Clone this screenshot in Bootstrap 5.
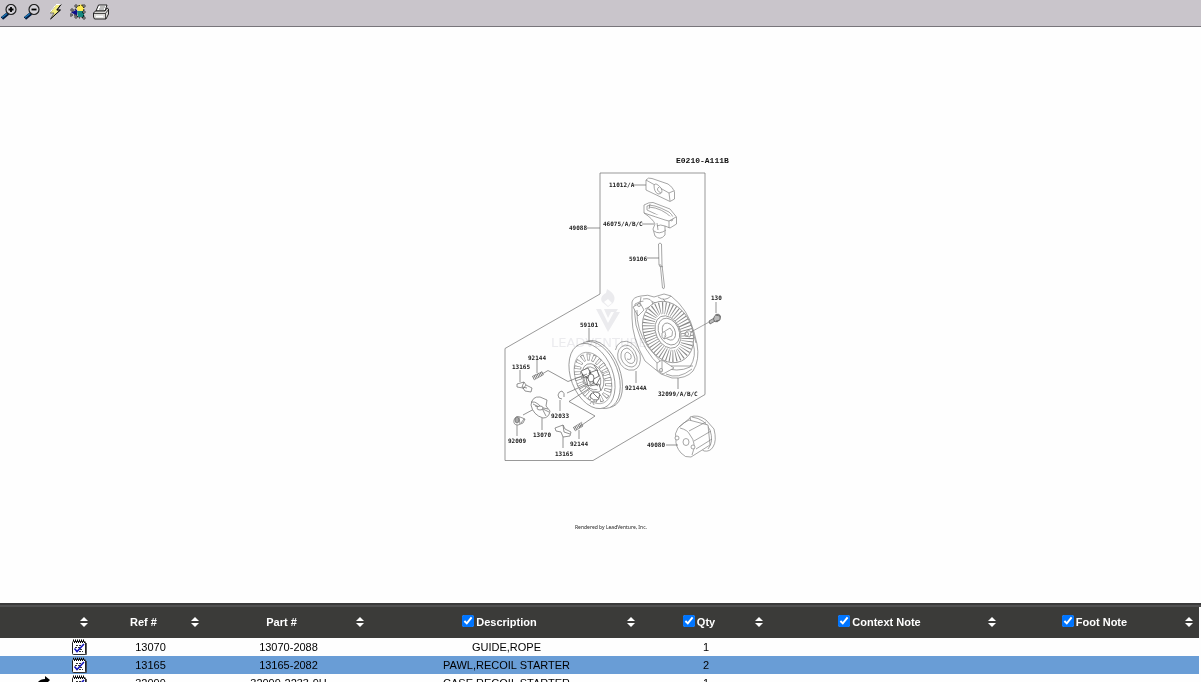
<!DOCTYPE html>
<html lang="en">
<head>
<meta charset="utf-8">
<meta name="viewport" content="width=device-width, initial-scale=1">
<title>Parts diagram</title>
<link rel="stylesheet" href="https://cdn.jsdelivr.net/npm/bootstrap@5.3.0/dist/css/bootstrap.min.css">
<style>
body { font-family: "Liberation Sans", Arial, sans-serif; font-size: 11px; line-height: 18px; color: #000; background: #fefefe; }
.toolstrip { background: #c9c5cb; border-bottom: 1px solid #77757a; height: 27px; gap: 7px; padding: 4px 1px 6px; flex: none; }
.tool { width: 16px; height: 16px; }
.plain-btn { background: none; border: 0; padding: 0; line-height: 0; display: block; }
.plain-btn svg { display: block; }
.drawing { min-height: 0; }
.drawing svg { display: block; width: 100%; height: 100%; }
.part-no { font: bold 6px "DejaVu Sans Mono", monospace; fill: #222; stroke: none; }
.sheet-no { font: bold 8px "Liberation Mono", monospace; fill: #111; stroke: none; }
.credit { font: 5px "Noto Sans", sans-serif; fill: #222; stroke: none; }
.wm { font: 13px "DejaVu Sans", sans-serif; fill: #ececef; stroke: none; }
.parts { flex: 0 0 79px; border-top: 2px solid #3a3a3a; }
.parts-scroll { border-top: 2px solid #505050; padding-right: 2px; height: 100%; }
.parts-table { table-layout: fixed; line-height: 18px; --bs-table-color: #000; color: #000; }
.parts-table > thead th { background: #3b3b39; color: #fff; height: 31px; padding: 0 6px 2px 2px; vertical-align: middle; }
.parts-table > tbody td { height: 18px; padding: 0 0 0 2px; text-align: center; vertical-align: middle; background: #fefefe; white-space: nowrap; }
.parts-table > tbody tr.picked td { background: #699dd6; }
.parts-table input { width: 12px; height: 12px; margin: 0 2px 3px 0; vertical-align: middle; accent-color: #0075ff; }
.c-mark { width: 8%; } .c-ref { width: 9%; } .c-part { width: 14%; } .c-desc { width: 22%; }
.c-qty { width: 11%; } .c-ctx { width: 19%; } .c-foot { width: 17%; }
@media (min-width: 900px) {
  .c-mark { width: 94px; } .c-ref { width: 111px; } .c-part { width: 165px; } .c-desc { width: auto; }
  .c-qty { width: 128px; } .c-ctx { width: 233px; } .c-foot { width: 197px; }
}
.marks { gap: 20px; padding-right: 7px; height: 18px; }
</style>
</head>
<body>
<svg width="0" height="0" class="position-absolute" aria-hidden="true">
  <symbol id="sort" viewBox="0 0 8 10"><path d="M4 0 8 4H0zM0 6h8L4 10z" fill="#fff"/></symbol>
  <symbol id="note" viewBox="0 0 16 16">
    <rect x="1.500" y="2.500" width="13" height="13" rx="1" fill="#fff" stroke="#222"/>
    <path d="M15.500 4v11.500H3" stroke="#333" fill="none" stroke-width=".8"/>
    <path d="M2 1.500h12M3 3.500h11" stroke="#000" stroke-dasharray="1 1"/>
    <path d="M2 .5h12" stroke="#777" stroke-dasharray="1 1"/>
    <path d="M5 6.500h5M4 8.500h5M9 10.500h3M8 12.500h4" stroke="#333" stroke-dasharray="2 1"/>
    <path d="M3.500 9.500 6 12.500 13 5" fill="none" stroke="#1515b8" stroke-width="1.600"/>
  </symbol>
</svg>

<div class="d-flex flex-column vh-100 overflow-hidden">
  <header class="toolstrip d-flex">
    <button class="plain-btn tool" type="button" aria-label="Zoom in"><svg width="16" height="16" viewBox="0 0 16 16"><path d="M1 14.500 7 9.500" stroke="#001a40" stroke-width="3.400"/><path d="M1 13.500 6 9.500" stroke="#1c78b8" stroke-width="1.400"/><circle cx="10" cy="5.500" r="5" fill="#d4d2d8" stroke="#222" stroke-width="1.200"/><path d="M10 3v5M7.500 5.500h5" stroke="#000" stroke-width="1.800"/></svg></button>
    <button class="plain-btn tool" type="button" aria-label="Zoom out"><svg width="16" height="16" viewBox="0 0 16 16"><path d="M1 14.500 7 9.500" stroke="#001a40" stroke-width="3.400"/><path d="M1 13.500 6 9.500" stroke="#1c78b8" stroke-width="1.400"/><circle cx="10" cy="5.500" r="5" fill="#d4d2d8" stroke="#222" stroke-width="1.200"/><path d="M7.500 5.500h5" stroke="#000" stroke-width="1.800"/></svg></button>
    <button class="plain-btn tool" type="button" aria-label="Reset"><svg width="16" height="16" viewBox="0 0 16 16"><path d="M14 .5 9.500 6H13L3.500 15 7 9H3L9 .5z" fill="#f6f080" stroke="#555" stroke-width=".7"/><path d="M14 .5H9L3 8.500" fill="none" stroke="#fff"/><path d="M14 .5 10 6h3.500L3.500 15" fill="none" stroke="#000"/></svg></button>
    <button class="plain-btn tool" type="button" aria-label="Hotspots"><svg width="16" height="16" viewBox="0 0 16 16"><circle cx="10.500" cy="4" r="3.500" fill="#ffec55"/><path d="m1 8.500 6-3v6z" fill="#10108a"/><path d="M7 7h7v6H8z" fill="#16877f"/><path d="M2 7l4-2 1-3 6-1 1 4-1 3 1 5-5 1-3-3-5 0" fill="none" stroke="#000" stroke-dasharray="1.500 1.500"/><g fill="#fff" stroke="#000" stroke-width=".7"><path d="M5 1h2v2H5zM13 1h2v2h-2zM1 5h2v2H1zM0 10h2v2H0zM5 12h2v2H5zM13 13h2v2h-2zM13 7h2v2h-2z"/></g></svg></button>
    <button class="plain-btn tool" type="button" aria-label="Print"><svg width="16" height="16" viewBox="0 0 16 16"><path d="M5.500 1H14l-2 6H3z" fill="#fff" stroke="#111" stroke-width=".9"/><path d="M7 3h5M6 5h5" stroke="#555" stroke-width=".8"/><path d="M2.500 7H12l2-3 1.500 1v5L13 15H1.500L.5 13V9z" fill="#dbdad8" stroke="#111" stroke-width=".9"/><path d="M1 9.500h11.500V15M12.500 9.500l3-4" stroke="#222" stroke-width=".8" fill="none"/><path d="M3 12.500h7" stroke="#fff" stroke-width="1.600"/></svg></button>
  </header>

  <main class="drawing flex-fill">
    <svg viewBox="450 27 301 576" role="img" aria-label="Recoil starter exploded view" fill="none" stroke="#808080" stroke-width=".7" stroke-linejoin="round">
      <!-- assembly frame -->
      <path d="M600 294V173H705V394.500L593 460.500H505V348.500L600 294" stroke="#6d6d6d"/>

      <!-- grip insert 11012/A -->
      <g fill="#fff">
        <path d="M646 185 646 180Q648 177 652 178.500L668 184Q673 187 674.500 192V199L670 201.500 646 190z"/>
        <path d="M646 180 669 193 674.500 190.500M669 193 670 201"/>
        <path d="M654 185Q656 182 661 188Q664 194 658 194Q654 192 654 185M659 187Q655 190 661 193"/>
      </g>
      <!-- handle 46075 -->
      <g fill="#fff">
        <path d="M644 205Q649 202 653 202.500L670 209 676.500 217V224L670 228 665 226V235Q660 241 655 236L653 229 655 224Q653 219 644 213z"/>
        <path d="M647 206Q652 203 669 212 675 217 672 221L666 219 647 210zM649 207Q662 208 672 218M650 204l-1 5"/>
        <path d="M644 213Q656 217 665 220L669 221 676 217M669 221v7M665 226Q660 224 657 226M654 231Q659 235 666 230M657 223l1 7"/>
      </g>
      <!-- rope -->
      <path d="M658.500 244Q660 242 661.500 244L662 265 664.500 287Q664 290 662.500 288L660.500 267 659 265zM659.500 264l3 3M659.500 266l3 1" fill="#fff"/>

      <!-- starter case -->
      <g fill="#fff">
        <path d="M632 302Q633 297 641 296Q648 294 654 297L664 294 671 296Q688 309 694 332L697 344Q700 360 693 371Q686 379 672 378L661 374 645 361Q632 338 632 318z"/>
        <path d="M635 304Q645 298 656 303 680 316 693 343 697 356 690 367 678 373 661 367 643 351 636 325 634 313 635 304"/>
        <path d="M637 310Q636 329 648 347L661 362M633 307 640 303 644 310 638 316zM641 297l-1 6M643 299Q652 297 653 305L645 309M658 297Q665 302 671 296M663 299l4 4"/>
        <path d="M657 363 662 360 674 368 663 374 657 370zM662 361v11M671 366 693 366M666 374Q678 380 692 369M686 321 691 325 693 332 696 343M687 325l-5 7 7 4M686 336l7 2"/>
        <g transform="rotate(-25 668 332)">
          <ellipse cx="668" cy="332" rx="24" ry="32"/>
          <ellipse cx="668" cy="332" rx="18" ry="25" stroke-width="12" stroke="#8a8a8a" stroke-dasharray=".9 1.900" fill="none"/>
          <ellipse cx="668" cy="332" rx="12" ry="17"/>
          <ellipse cx="669" cy="332" rx="10" ry="14"/>
          <ellipse cx="669" cy="332" rx="6" ry="9"/>
        </g>
        <path d="M662 333 670 328Q674 331 672 336L664 339Q661 337 662 333zM664 339Q667 336 665 332"/>
        <path d="M685 333q3-4 6-1l-1 5-5-1z"/><ellipse cx="687" cy="334" rx="1.500" ry="2"/>
        <circle cx="661" cy="370" r="1.500"/><circle cx="639" cy="305" r="1.500"/>
      </g>
      <!-- bolt 130 -->
      <path d="M691 332 710 321.500"/>
      <g fill="#bbb" stroke="#555"><path d="m709 321 7-4 1 3-7 4z"/><ellipse cx="717" cy="318" rx="3" ry="4" transform="rotate(25 717 318)"/><path d="m715 315 5 1v4l-4 1"/></g>

      <!-- spiral spring -->
      <path d="M615.500 350Q616 345 621 342 632 338 640 354 642 367 634 370 623 372 618 359 616 348 625 345 634 345 637 357 638 366 632 367 624 367 621 358 620 349 627 348 633 350 635 359 634 365 629 363 624 360 625 354 627 350 631 355 632 361 627 359"/>

      <!-- pulley -->
      <g fill="#fff">
        <ellipse cx="600" cy="374" rx="20" ry="35" transform="rotate(-21 600 374)"/>
        <ellipse cx="597" cy="375" rx="21" ry="35" transform="rotate(-21 597 375)"/>
        <ellipse cx="592" cy="376" rx="21" ry="34" transform="rotate(-21 592 376)"/>
        <g transform="rotate(-23 593 378)">
          <ellipse cx="593" cy="378" rx="17" ry="27" stroke="#999"/>
          <ellipse cx="593" cy="378" rx="14" ry="22" stroke-width="7" stroke="#888" stroke-dasharray="3 2.500" fill="none"/>
          <ellipse cx="593" cy="378" rx="14" ry="22" stroke-width="5.500" stroke="#fff" stroke-dasharray="1.800 3.700" stroke-dashoffset="-.6" fill="none"/>
          <ellipse cx="593" cy="378" rx="10" ry="15"/>
          <ellipse cx="592" cy="378" rx="8" ry="12"/>
        </g>
        <g stroke="#444"><path d="M581 371 588 368 591 374 584 378zM589 373 597 370 599 376 592 380zM586 378 592 376 594 383 588 386zM590 386 599 384 601 391M591 394q4-4 9 0l-2 6q-5 1-8-3zM594 365l4 6M600 378l-4 7M593 393l5 5M582 374l16 12M590 370v14"/><ellipse cx="591" cy="378" rx="3" ry="4"/></g>
        <path d="m590 404 2-3 2 4"/>
      </g>

      <!-- center lines -->
      <path d="M543 373.500 548 370.500 568 381.500 587 374M567 393 587 384M523 415 536 408M579 427 595 416 569 401.500 590 388" stroke="#666"/>

      <!-- ratchet pieces -->
      <g fill="#fff" stroke="#666">
        <path d="m517 384 7-2 2 3 6 3-1 4-6-1-2-3-6-1zM524 382l-2 5 5 1M526 385l-3 4"/>
        <path d="m555 428 8-3 2 4 6 3-1 4-7 1-2-5-5-1zM563 425l1 7 6 2"/>
        <path d="M562 399Q558 399 558 395 559 391 562 391 565 393 564 397" fill="none"/>
        <path d="M531 405Q532 396 540 397L547 400 546 406 550 411Q549 418 543 418 533 415 531 405zM531 402Q539 400 546 416M533 404 549 412M535 406 548 409"/>
        <ellipse cx="540" cy="408" rx="3" ry="2"/>
        <path d="M514 420q2-5 6-3l5 2-2 4-5 2q-5 0-4-5zM519 417l1 7M524 419l-3 4"/><ellipse cx="517" cy="420" rx="2" ry="3" fill="#aaa"/>
      </g>
      <!-- small springs -->
      <g stroke="#666"><path d="m533 378 10-5M574 429l9-5" stroke-width="4" stroke-dasharray=".8 .9"/><path d="m533 376 9-4M534 380l9-5M574 427l8-5M575 431l8-5" stroke-width=".5"/></g>

      <!-- cup 49080 -->
      <g fill="#fff">
        <path d="M690 417Q698 414 706 420L714 429Q717 441 713 447 710 452 704 451L696 445z"/>
        <path d="M692 417Q705 419 710 430 714 442 708 449"/>
        <path d="M689 420 708 425 710 445 691 457Q685 458 681 453 675 446 676 439 674 434 678 428 684 422 689 420z"/>
        <path d="M680 428Q688 430 690 435 697 443 692 455M689 431 706 422M694 441 711 431M696 449 712 439M679 427 690 418"/>
        <ellipse cx="686" cy="442" rx="3" ry="3.500"/><circle cx="677" cy="438" r="2"/><circle cx="693" cy="447" r="2"/>
      </g>

      <!-- watermark, laid over the parts -->
      <g fill="#ececef" stroke="none" style="mix-blend-mode:multiply">
        <path d="M607 289c8 5 9 9 6 14l-5 4-6-5c-2-4 0-7 4-9zM608 299l-4 3 4 4 4-3z"/>
        <path d="M596 309h5l7 14 6-11h6l-12 20zM604 309h14l-2 3h-5l-3 6z"/>
        <text x="551" y="347" class="wm">LEADVENTURE</text>
      </g>

      <!-- leaders -->
      <path d="M634 185H646M642 224H654M587 228H600M647 258H659M716 302V313M589 328V342M537 360V373M520 370V382M560 400V411M542 418V430M517 425V436M579 430V439M563 437V448M636 371V383M678 378V389M666 445H678" stroke="#666"/>

      <text x="676" y="163" class="sheet-no">E0210-A111B</text>
      <g class="part-no">
        <text x="609" y="187">11012/A</text><text x="603" y="226">46075/A/B/C</text>
        <text x="569" y="230">49088</text><text x="629" y="261">59106</text>
        <text x="711" y="300">130</text><text x="580" y="327">59101</text>
        <text x="528" y="360">92144</text><text x="512" y="369">13165</text>
        <text x="625" y="390">92144A</text><text x="658" y="396">32099/A/B/C</text>
        <text x="551" y="418">92033</text><text x="533" y="437">13070</text>
        <text x="508" y="443">92009</text><text x="570" y="446">92144</text>
        <text x="555" y="456">13165</text><text x="647" y="447">49080</text>
      </g>
      <text x="575" y="529" class="credit">Rendered by LeadVenture, Inc.</text>
    </svg>
  </main>

  <section class="parts overflow-hidden">
    <div class="parts-scroll overflow-hidden">
      <table class="table table-borderless mb-0 parts-table">
        <colgroup><col class="c-mark"><col class="c-ref"><col class="c-part"><col class="c-desc"><col class="c-qty"><col class="c-ctx"><col class="c-foot"></colgroup>
        <thead>
          <tr>
            <th scope="col"><div class="d-flex align-items-center justify-content-end"><button class="plain-btn" type="button" aria-label="Sort by mark"><svg width="8" height="10"><use href="#sort"/></svg></button></div></th>
            <th scope="col"><div class="d-flex align-items-center"><span class="flex-fill text-center">Ref #</span><button class="plain-btn" type="button" aria-label="Sort by ref"><svg width="8" height="10"><use href="#sort"/></svg></button></div></th>
            <th scope="col"><div class="d-flex align-items-center"><span class="flex-fill text-center">Part #</span><button class="plain-btn" type="button" aria-label="Sort by part"><svg width="8" height="10"><use href="#sort"/></svg></button></div></th>
            <th scope="col"><div class="d-flex align-items-center"><label class="flex-fill text-center"><input type="checkbox" checked>Description</label><button class="plain-btn" type="button" aria-label="Sort by description"><svg width="8" height="10"><use href="#sort"/></svg></button></div></th>
            <th scope="col"><div class="d-flex align-items-center"><label class="flex-fill text-center"><input type="checkbox" checked>Qty</label><button class="plain-btn" type="button" aria-label="Sort by quantity"><svg width="8" height="10"><use href="#sort"/></svg></button></div></th>
            <th scope="col"><div class="d-flex align-items-center"><label class="flex-fill text-center"><input type="checkbox" checked>Context Note</label><button class="plain-btn" type="button" aria-label="Sort by context note"><svg width="8" height="10"><use href="#sort"/></svg></button></div></th>
            <th scope="col"><div class="d-flex align-items-center"><label class="flex-fill text-center"><input type="checkbox" checked>Foot Note</label><button class="plain-btn" type="button" aria-label="Sort by foot note"><svg width="8" height="10"><use href="#sort"/></svg></button></div></th>
          </tr>
        </thead>
        <tbody>
          <tr><td><div class="marks d-flex align-items-center justify-content-end"><svg width="16" height="16"><use href="#note"/></svg></div></td><td>13070</td><td>13070-2088</td><td>GUIDE,ROPE</td><td>1</td><td></td><td></td></tr>
          <tr class="picked"><td><div class="marks d-flex align-items-center justify-content-end"><svg width="16" height="16"><use href="#note"/></svg></div></td><td>13165</td><td>13165-2082</td><td>PAWL,RECOIL STARTER</td><td>2</td><td></td><td></td></tr>
          <tr><td><div class="marks d-flex align-items-center justify-content-end"><svg width="16" height="16" viewBox="0 0 16 16"><path d="M1 11Q3 4 10 4V1l5 4-5 5V7Q5 7 1 11z"/></svg><svg width="16" height="16"><use href="#note"/></svg></div></td><td>32099</td><td>32099-2233-9H</td><td>CASE,RECOIL STARTER</td><td>1</td><td></td><td></td></tr>
        </tbody>
      </table>
    </div>
  </section>
</div>
<script src="https://cdn.jsdelivr.net/npm/bootstrap@5.3.0/dist/js/bootstrap.bundle.min.js"></script>
</body>
</html>
